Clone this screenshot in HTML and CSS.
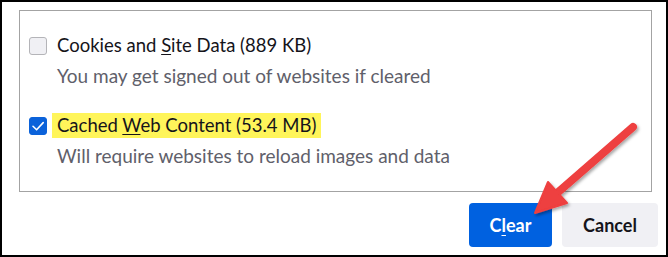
FILE: index.html
```html
<!DOCTYPE html>
<html lang="en">
<head>
<meta charset="utf-8">
<title>Clear Data</title>
<link rel="stylesheet" href="styles.css">
</head>
<body>
<div class="frame">
  <div class="panel">
    <div class="option">
      <div class="row">
        <span class="box"></span>
        <span class="label">Cookies and <u>S</u>ite Data (889 KB)</span>
      </div>
      <div class="desc">You may get signed out of websites if cleared</div>
    </div>
    <div class="option">
      <div class="row">
        <span class="box checked">
          <svg viewBox="0 0 18 18" width="18" height="18"><path d="M4 9.3 L7.6 12.8 L14.2 5.6" fill="none" stroke="#fff" stroke-width="1.6" stroke-linecap="round" stroke-linejoin="round"/></svg>
        </span>
        <span class="label hl">Cached <u>W</u>eb Content (53.4 MB)</span>
      </div>
      <div class="desc">Will require websites to reload images and data</div>
    </div>
  </div>
  <div class="actions">
    <button class="btn primary">C<u>l</u>ear</button>
    <button class="btn secondary">Cancel</button>
  </div>
  <svg class="arrow" viewBox="0 0 668 257" width="668" height="257">
    <defs>
      <filter id="sh" x="-20%" y="-20%" width="140%" height="140%">
        <feDropShadow dx="1.5" dy="2" stdDeviation="1.5" flood-color="#000" flood-opacity="0.35"/>
      </filter>
    </defs>
    <g filter="url(#sh)" fill="#ee3f3f" stroke="#ee3f3f">
      <line x1="633" y1="127" x2="556" y2="194" stroke-width="8" stroke-linecap="round"/>
      <polygon points="535,213 548,182 567,203" stroke-width="2" stroke-linejoin="round"/>
    </g>
  </svg>
</div>
</body>
</html>
```

FILE: styles.css
```css
html, body {
  margin: 0;
  padding: 0;
  background: #fff;
}

.frame {
  position: relative;
  box-sizing: border-box;
  width: 668px;
  height: 257px;
  border: 2px solid #000;
  background: #fff;
  font-family: Lato, "Liberation Sans", sans-serif;
  color: #15141a;
}

.panel {
  box-sizing: border-box;
  height: 182px;
  margin: 8px 14px 0 17px;
  border: 1px solid #a3a3a3;
  padding: 22px 0 0 9px;
}

.option + .option {
  margin-top: 25px;
}

.row {
  display: flex;
  align-items: center;
  height: 25px;
}

.box {
  box-sizing: border-box;
  width: 18px;
  height: 18px;
  border: 1px solid #b4b4b8;
  border-radius: 3px;
  background: #f0f0f4;
  margin-right: 5px;
  display: flex;
}

.box.checked {
  background: #0b62da;
  border-color: #0b62da;
}

.box svg {
  margin: -1px;
}

.label {
  font-size: 18.5px;
  line-height: 25px;
  padding: 0 5px;
}

.hl {
  background: #fff55a;
}

.label u {
  text-underline-offset: 2px;
  text-decoration-thickness: 1px;
}

.desc {
  margin-top: 5px;
  padding-left: 28px;
  font-size: 19px;
  line-height: 25px;
  color: #60606a;
}

.actions {
  display: flex;
  justify-content: flex-end;
  gap: 10px;
  padding: 11px 8px 0 0;
}

.btn {
  height: 44px;
  border: none;
  border-radius: 4px;
  font-family: Lato, "Liberation Sans", sans-serif;
  font-size: 18px;
  font-weight: 700;
  padding: 0;
}

.btn u {
  text-underline-offset: 3px;
  text-decoration-thickness: 1px;
}

.primary {
  width: 83px;
  background: #0061e0;
  color: #fff;
}

.secondary {
  width: 96px;
  background: #f0f0f4;
  color: #15141a;
}

.arrow {
  position: absolute;
  left: -2px;
  top: -2px;
  pointer-events: none;
}
```
